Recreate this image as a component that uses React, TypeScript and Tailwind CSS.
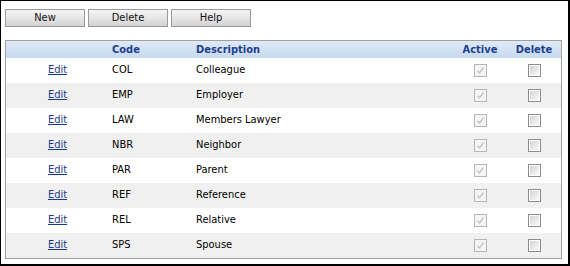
import React from "react";

const rows = [
  { code: "COL", desc: "Colleague" },
  { code: "EMP", desc: "Employer" },
  { code: "LAW", desc: "Members Lawyer" },
  { code: "NBR", desc: "Neighbor" },
  { code: "PAR", desc: "Parent" },
  { code: "REF", desc: "Reference" },
  { code: "REL", desc: "Relative" },
  { code: "SPS", desc: "Spouse" },
];

function Btn({ label }: { label: string }) {
  return (
    <button className="w-[80px] h-[18px] border border-[#9a9a9a] bg-gradient-to-b from-[#f4f4f4] via-[#e6e6e6] to-[#d2d2d2] text-[11px] leading-[16px] text-[#111]">
      {label}
    </button>
  );
}

function ActiveBox() {
  return (
    <div className="w-[13px] h-[13px] border border-[#b5b5b5] bg-[#f5f5f5] flex items-center justify-center">
      <svg width="9" height="9" viewBox="0 0 9 9">
        <path d="M1.5 4.8 L3.5 7 L7.5 1.5" fill="none" stroke="#c4c4c4" strokeWidth="1.4" />
      </svg>
    </div>
  );
}

function DeleteBox() {
  return (
    <div className="w-[13px] h-[13px] border border-[#8c8c8c] bg-white p-[1px]">
      <div className="w-full h-full bg-gradient-to-br from-[#d4d4d4] to-[#fafafa]" />
    </div>
  );
}

export default function App() {
  return (
    <div
      className="w-[570px] h-[266px] bg-white border-l border-t border-r-2 border-b-2 border-black pl-[4px] pt-[8px]"
      style={{ fontFamily: '"DejaVu Sans Condensed", "Liberation Sans", sans-serif' }}
    >
      <div className="flex gap-[3px]">
        <Btn label="New" />
        <Btn label="Delete" />
        <Btn label="Help" />
      </div>
      <div className="mt-[13px] w-[557px] border border-[#a0a0a0]">
        <div className="grid grid-cols-[103px_84px_1fr_54px_54px] h-[17px] bg-gradient-to-b from-[#e0eaf7] to-[#c6d8f0] text-[11px] font-bold text-[#1c3f8c] leading-[17px]">
          <div />
          <div className="pl-[3px]">Code</div>
          <div className="pl-[3px]">Description</div>
          <div className="text-center">Active</div>
          <div className="text-center">Delete</div>
        </div>
        {rows.map((r, i) => (
          <div
            key={r.code}
            className={`grid grid-cols-[103px_84px_1fr_54px_54px] h-[25px] items-center text-[11px] text-black ${
              i % 2 === 1 ? "bg-[#f0f0f0]" : "bg-white"
            }`}
          >
            <div className="text-center">
              <a href="#" className="text-[#1a3a8a] underline">Edit</a>
            </div>
            <div className="pl-[3px]">{r.code}</div>
            <div className="pl-[3px]">{r.desc}</div>
            <div className="flex justify-center">
              <ActiveBox />
            </div>
            <div className="flex justify-center">
              <DeleteBox />
            </div>
          </div>
        ))}
      </div>
    </div>
  );
}
